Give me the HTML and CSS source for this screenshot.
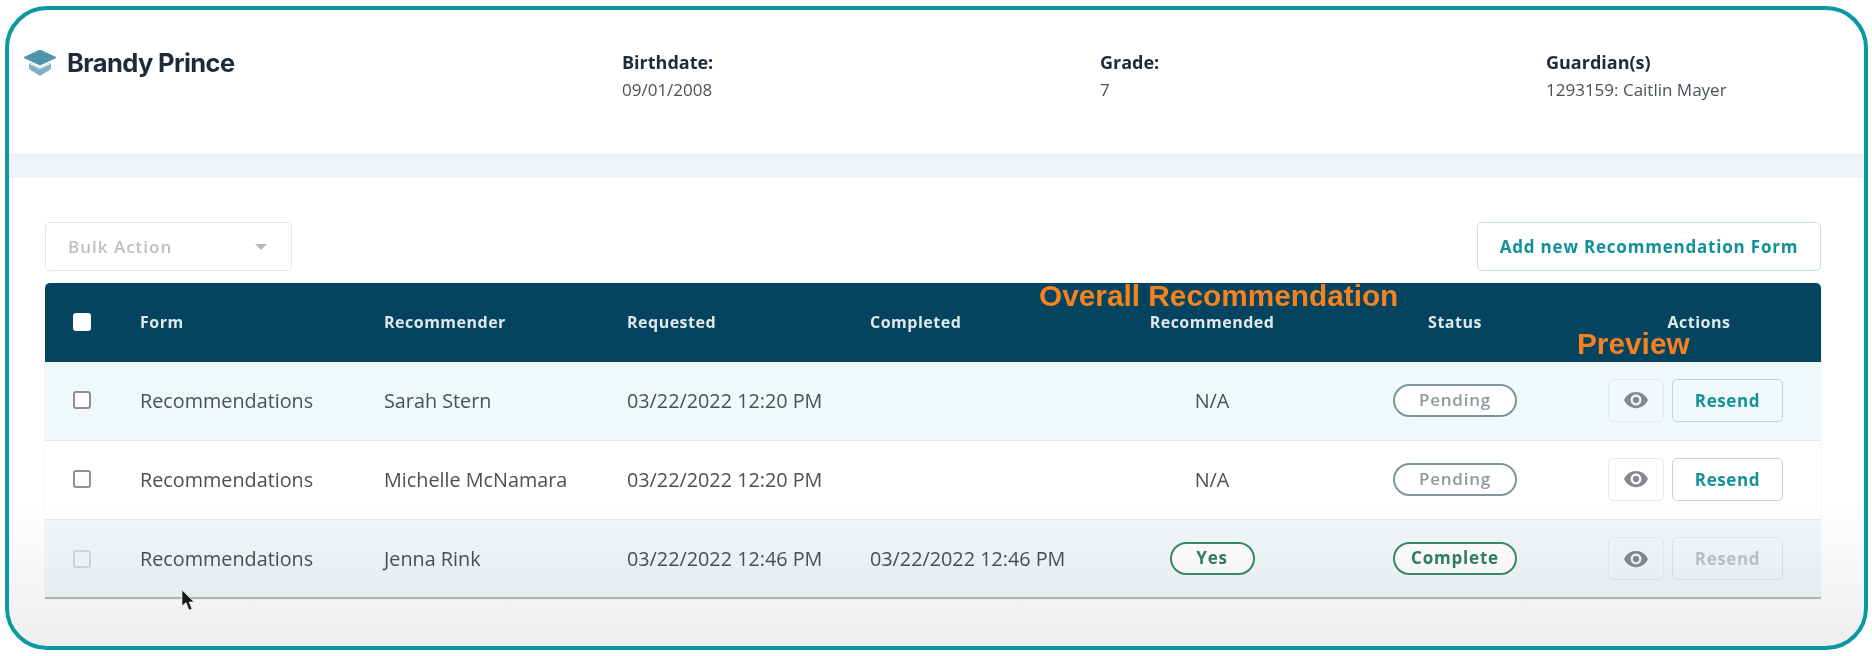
FILE: index.html
```html
<!DOCTYPE html>
<html lang="en">
<head>
  <meta charset="UTF-8">
  <meta name="viewport" content="width=device-width, initial-scale=1.0">
  <title>Student Recommendations</title>
  <link rel="stylesheet" href="styles.css">
</head>
<body>

  <div class="frame">

    <!-- Student header -->
    <div class="student">
      <div class="student-name">
        <svg class="cap" viewBox="0 0 32 26">
          <path d="M16 0 L32 7.5 L16 15 L0 7.5 Z" fill="#4f93a8" stroke="#4f93a8" stroke-linejoin="round"/>
          <path d="M5 12.5 L16 18 L27 12.5 V19 L16 26 L5 19 Z" fill="#7fb2c2"/>
          <path d="M5 13 L16 18.5 L27 13" fill="none" stroke="#d3e6ec" stroke-width="1.5"/>
        </svg>
        <span>Brandy Prince</span>
      </div>
      <div class="student-field birthdate">
        <b>Birthdate:</b>
        <span>09/01/2008</span>
      </div>
      <div class="student-field grade">
        <b>Grade:</b>
        <span>7</span>
      </div>
      <div class="student-field guardian">
        <b>Guardian(s)</b>
        <span>1293159: Caitlin Mayer</span>
      </div>
    </div>
    <div class="band"></div>

    <!-- Recommendations -->
    <div class="content">
      <div class="toolbar">
        <div class="bulk-select">
          <span>Bulk Action</span>
          <i class="caret"></i>
        </div>
        <button class="add-btn">Add new Recommendation Form</button>
      </div>

      <div class="table">
        <div class="row head">
          <div class="cell-check"><span class="check checked"></span></div>
          <div>Form</div>
          <div>Recommender</div>
          <div>Requested</div>
          <div>Completed</div>
          <div class="center">Recommended</div>
          <div class="center">Status</div>
          <div class="center head-actions">Actions</div>
        </div>

        <div class="row tint">
          <div class="cell-check"><span class="check"></span></div>
          <div>Recommendations</div>
          <div>Sarah Stern</div>
          <div>03/22/2022 12:20 PM</div>
          <div></div>
          <div class="center">N/A</div>
          <div class="center"><span class="pill pending">Pending</span></div>
          <div class="actions">
            <button class="eye-btn"><svg viewBox="0 0 24 24"><path d="M12 4.5C7 4.5 2.73 7.61 1 12c1.73 4.39 6 7.5 11 7.5s9.27-3.11 11-7.5c-1.73-4.39-6-7.5-11-7.5zM12 17c-2.76 0-5-2.24-5-5s2.24-5 5-5 5 2.24 5 5-2.24 5-5 5zm0-8c-1.66 0-3 1.34-3 3s1.34 3 3 3 3-1.34 3-3-1.34-3-3-3z"/></svg></button>
            <button class="resend">Resend</button>
          </div>
        </div>

        <div class="row">
          <div class="cell-check"><span class="check"></span></div>
          <div>Recommendations</div>
          <div>Michelle McNamara</div>
          <div>03/22/2022 12:20 PM</div>
          <div></div>
          <div class="center">N/A</div>
          <div class="center"><span class="pill pending">Pending</span></div>
          <div class="actions">
            <button class="eye-btn"><svg viewBox="0 0 24 24"><path d="M12 4.5C7 4.5 2.73 7.61 1 12c1.73 4.39 6 7.5 11 7.5s9.27-3.11 11-7.5c-1.73-4.39-6-7.5-11-7.5zM12 17c-2.76 0-5-2.24-5-5s2.24-5 5-5 5 2.24 5 5-2.24 5-5 5zm0-8c-1.66 0-3 1.34-3 3s1.34 3 3 3 3-1.34 3-3-1.34-3-3-3z"/></svg></button>
            <button class="resend">Resend</button>
          </div>
        </div>

        <div class="row tint">
          <div class="cell-check"><span class="check disabled"></span></div>
          <div>Recommendations</div>
          <div>Jenna Rink</div>
          <div>03/22/2022 12:46 PM</div>
          <div>03/22/2022 12:46 PM</div>
          <div class="center"><span class="pill yes">Yes</span></div>
          <div class="center"><span class="pill complete">Complete</span></div>
          <div class="actions">
            <button class="eye-btn"><svg viewBox="0 0 24 24"><path d="M12 4.5C7 4.5 2.73 7.61 1 12c1.73 4.39 6 7.5 11 7.5s9.27-3.11 11-7.5c-1.73-4.39-6-7.5-11-7.5zM12 17c-2.76 0-5-2.24-5-5s2.24-5 5-5 5 2.24 5 5-2.24 5-5 5zm0-8c-1.66 0-3 1.34-3 3s1.34 3 3 3 3-1.34 3-3-1.34-3-3-3z"/></svg></button>
            <button class="resend disabled">Resend</button>
          </div>
        </div>
      </div>
    </div>

    <!-- Annotations on top of the video frame -->
    <div class="note note-overall">Overall Recommendation</div>
    <div class="note note-preview">Preview</div>
    <svg class="cursor" viewBox="0 0 14 22">
      <path d="M1 0 L1 16 L5 12.5 L8 20 L11 19 L8 12 L13 12 Z" fill="#1a1a1a" stroke="#fff" stroke-width="0.6"/>
    </svg>
  </div>

</body>
</html>
```

FILE: styles.css
```css
/* Basic styling */
body, html {
  margin: 0;
  padding: 0;
  background-color: #fff;
  font-family: "Open Sans", sans-serif;
  color: #4a5156;
  overflow: hidden;
}
button {
  font-family: inherit;
  cursor: pointer;
}

/* Outer rounded frame */
.frame {
  position: relative;
  box-sizing: border-box;
  width: 1863px;
  height: 644px;
  margin: 6px 0 0 5px;
  border: 4px solid #0a98a2;
  border-radius: 42px;
  overflow: hidden;
  background-color: #fff;
  filter: blur(0.6px);
}
/* bottom of the picture fades to grey */
.frame::after {
  content: "";
  position: absolute;
  left: 0;
  right: 0;
  top: 490px;
  bottom: 0;
  background: linear-gradient(rgba(0, 0, 0, 0), rgba(0, 0, 0, 0.065));
  pointer-events: none;
}

/* Student header */
.student {
  display: flex;
  height: 144px;
  padding-top: 42px;
  box-sizing: border-box;
  color: #1f2a3a;
}
.student-name {
  display: flex;
  align-items: flex-start;
  gap: 11px;
  width: 613px;
  margin-top: -2px;
  padding-left: 15px;
  box-sizing: border-box;
  font-family: Inter, sans-serif;
  font-size: 25.5px;
  font-weight: 700;
  line-height: 26px;
  letter-spacing: -0.6px;
}
.cap {
  width: 32px;
  height: 26px;
}
.student-field {
  display: flex;
  flex-direction: column;
  gap: 8px;
  font-size: 18px;
  line-height: 20px;
}
.student-field b {
  font-weight: 700;
}
.student-field span {
  font-size: 17px;
  color: #4a5156;
}
.birthdate { width: 478px; }
.grade { width: 446px; }

.band {
  height: 24px;
  background-color: #f1f4f6;
  border-top: 1px solid #e6eaed;
  box-sizing: border-box;
}

/* Main section */
.content {
  padding: 44px 43px 0 36px;
}
.toolbar {
  display: flex;
  justify-content: space-between;
  align-items: center;
  margin-bottom: 12px;
}
.bulk-select {
  display: flex;
  justify-content: space-between;
  align-items: center;
  box-sizing: border-box;
  width: 247px;
  height: 49px;
  padding: 0 24px 0 22px;
  border: 1px solid #e4e7e9;
  border-radius: 5px;
  font-size: 17px;
  letter-spacing: 1px;
  font-weight: 600;
  color: #bcc0c3;
}
.caret {
  width: 0;
  height: 0;
  border-left: 6px solid transparent;
  border-right: 6px solid transparent;
  border-top: 6px solid #b4b8bb;
}
.add-btn {
  box-sizing: border-box;
  width: 344px;
  height: 49px;
  padding: 0;
  background-color: #fff;
  border: 1px solid #c8dde0;
  border-radius: 5px;
  font-size: 17px;
  letter-spacing: 0.8px;
  font-weight: 700;
  color: #12909a;
}

/* Table */
.table {
  border-radius: 5px 5px 0 0;
  box-shadow: 0 2px 1px rgba(0, 0, 0, 0.28);
}
.row {
  display: grid;
  grid-template-columns: 95px 244px 243px 243px 243px 198px 288px 222px;
  align-items: center;
  height: 79px;
  padding-bottom: 2px;
  box-sizing: border-box;
  border-bottom: 1px solid #e4e8ea;
  background-color: #fff;
  font-size: 19.8px;
}
.row.tint {
  background-color: #f1f8fa;
}
.row.head {
  border-bottom: none;
  border-radius: 5px 5px 0 0;
  background-color: #04445f;
  color: #dfe8ec;
  font-size: 16px;
  letter-spacing: 0.5px;
  font-weight: 700;
}
.row:last-child {
  height: 77px;
  padding-bottom: 0;
  border-bottom: none;
}
.head-actions {
  padding-right: 22px;
}
.center {
  text-align: center;
}
.cell-check {
  padding-left: 28px;
}
.check {
  display: block;
  box-sizing: border-box;
  width: 18px;
  height: 18px;
  background-color: #fff;
  border: 2px solid #8b9196;
  border-radius: 3px;
}
.check.checked {
  border-color: #fff;
}
.check.disabled {
  background-color: transparent;
  border-color: #d5d9db;
}

/* Status pills */
.pill {
  display: inline-block;
  box-sizing: border-box;
  height: 33px;
  line-height: 27px;
  border: 2px solid #7f9599;
  border-radius: 17px;
  background-color: #fff;
  text-align: center;
  font-size: 17px;
  letter-spacing: 0.8px;
  font-weight: 600;
  vertical-align: middle;
}
.pill.pending {
  width: 124px;
  color: #8e9a9e;
}
.pill.complete {
  width: 124px;
  border-color: #39896a;
  color: #2f7f60;
  font-weight: 700;
}
.pill.yes {
  width: 85px;
  border-color: #39896a;
  color: #2f7f60;
  font-weight: 700;
}

/* Row actions */
.actions {
  display: flex;
  gap: 8px;
  padding-left: 9px;
}
.eye-btn {
  display: flex;
  align-items: center;
  justify-content: center;
  box-sizing: border-box;
  width: 56px;
  height: 43px;
  padding: 0;
  background-color: transparent;
  border: 1px solid #e4e9ec;
  border-radius: 5px;
}
.eye-btn svg {
  width: 26px;
  height: 26px;
  fill: #85898d;
}
.resend {
  box-sizing: border-box;
  width: 111px;
  height: 43px;
  padding: 0;
  background-color: transparent;
  border: 1px solid #bfd2d4;
  border-radius: 5px;
  font-size: 17px;
  letter-spacing: 0.6px;
  font-weight: 700;
  color: #14919a;
}
.resend.disabled {
  border-color: #dfe3e5;
  color: #bfc4c7;
}

/* Orange annotations */
.note {
  position: absolute;
  font-family: "Liberation Sans", sans-serif;
  font-weight: 700;
  color: #f5821f;
  white-space: nowrap;
  font-size: 29.8px;
  line-height: 34px;
}
.note-overall {
  left: 1030px;
  top: 269px;
}
.note-preview {
  left: 1568px;
  top: 317px;
}
.cursor {
  position: absolute;
  left: 172px;
  top: 580px;
  width: 14px;
  height: 22px;
}
```
